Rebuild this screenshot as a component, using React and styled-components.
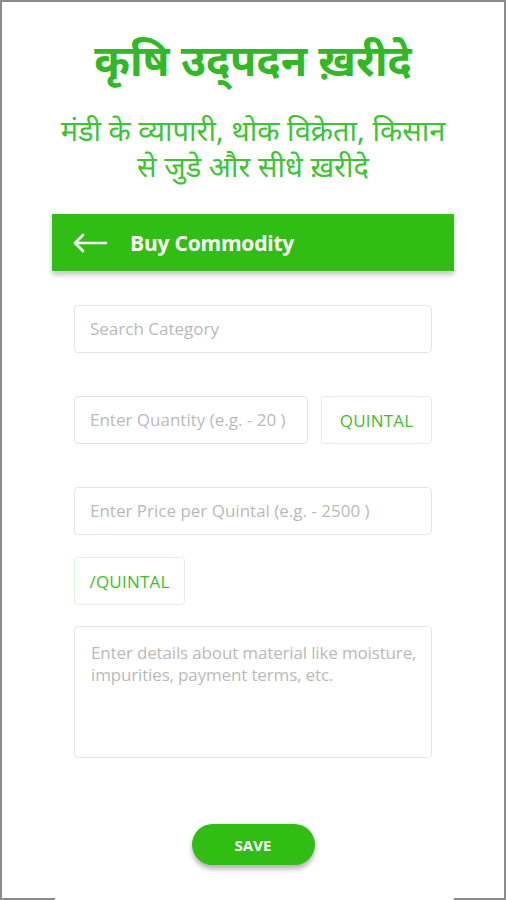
import React from 'react';
import styled, { createGlobalStyle } from 'styled-components';

const GlobalStyle = createGlobalStyle`
  * { box-sizing: border-box; }
  body {
    margin: 0;
    background: #fff;
    font-family: "Open Sans", "Noto Sans", sans-serif;
  }
`;

const Frame = styled.div`
  position: relative;
  width: 506px;
  height: 900px;
  border: 2px solid #8c8c8c;
  border-bottom: none;
  display: flex;
  flex-direction: column;
  align-items: center;
  overflow: hidden;

  &::before,
  &::after {
    content: '';
    position: absolute;
    bottom: 0;
    height: 2px;
    background: #8c8c8c;
  }
  &::before { left: 0; width: 53px; }
  &::after { right: 0; width: 50px; }
`;

const Title = styled.h1`
  margin: 26px 0 0;
  font-family: "Noto Sans", sans-serif;
  font-size: 43px;
  font-weight: 700;
  line-height: 64px;
  color: #2fb925;
  text-align: center;
`;

const Subtitle = styled.p`
  margin: 20px 0 0;
  font-family: "Noto Sans", sans-serif;
  font-size: 29px;
  line-height: 36px;
  color: #3cc532;
  text-align: center;
`;

const HeaderBar = styled.div`
  margin-top: 30px;
  width: 402px;
  height: 57px;
  background: #30be14;
  display: flex;
  align-items: center;
  gap: 22px;
  padding-left: 20px;
  box-shadow: 0 4px 5px rgba(0, 0, 0, 0.22);
`;

const HeaderTitle = styled.span`
  color: #fff;
  font-size: 21px;
  font-weight: 700;
  letter-spacing: -0.2px;
`;

const Form = styled.div`
  width: 358px;
  margin-top: 34px;
  display: flex;
  flex-direction: column;
  align-items: flex-start;
`;

const Row = styled.div`
  display: flex;
  gap: 13px;
  width: 100%;
  margin-top: ${p => p.$top || 0}px;
`;

const Field = styled.div`
  flex: ${p => (p.$grow ? 1 : 'none')};
  width: 100%;
  height: ${p => p.$height || 48}px;
  border: 1px solid #e6e6e6;
  border-radius: 4px;
  padding: ${p => (p.$multi ? '15px 2px 15px 16px' : '0 15px')};
  display: flex;
  align-items: ${p => (p.$multi ? 'flex-start' : 'center')};
  color: #bababa;
  font-size: 17px;
  line-height: 22px;
  letter-spacing: ${p => (p.$multi ? '-0.15px' : '0')};
  margin-top: ${p => p.$top || 0}px;
`;

const UnitButton = styled.div`
  width: 111px;
  height: 48px;
  border: 1px solid #dff2dc;
  border-radius: 4px;
  display: flex;
  align-items: center;
  justify-content: center;
  color: #3cbf2e;
  font-size: 17px;
  letter-spacing: 0.2px;
  margin-top: ${p => p.$top || 0}px;
`;

const SaveButton = styled.button`
  margin-top: 66px;
  width: 123px;
  height: 41px;
  border: none;
  border-radius: 21px;
  background: #30be14;
  color: #fff;
  font-family: "Open Sans", sans-serif;
  font-size: 15px;
  font-weight: 700;
  box-shadow: 0 4px 5px rgba(0, 0, 0, 0.3);
`;

const BackArrow = () => (
  <svg width="36" height="20" viewBox="0 0 36 20" fill="none" stroke="#fff" strokeWidth="2.6" strokeLinecap="round" strokeLinejoin="round">
    <path d="M34 10H3" />
    <path d="M11 2L3 10l8 8" />
  </svg>
);

export default function App() {
  return (
    <>
      <GlobalStyle />
      <Frame>
        <Title>कृषि उद्पदन ख़रीदे</Title>
        <Subtitle>
          मंडी के व्यापारी, थोक विक्रेता, किसान
          <br />
          से जुडे और सीधे ख़रीदे
        </Subtitle>
        <HeaderBar>
          <BackArrow />
          <HeaderTitle>Buy Commodity</HeaderTitle>
        </HeaderBar>
        <Form>
          <Field>Search Category</Field>
          <Row $top={43}>
            <Field $grow>Enter Quantity (e.g. - 20 )</Field>
            <UnitButton>QUINTAL</UnitButton>
          </Row>
          <Field $top={43}>Enter Price per Quintal (e.g. - 2500 )</Field>
          <UnitButton $top={22}>/QUINTAL</UnitButton>
          <Field $top={21} $height={132} $multi>
            Enter details about material like moisture, impurities, payment terms, etc.
          </Field>
        </Form>
        <SaveButton>SAVE</SaveButton>
      </Frame>
    </>
  );
}
